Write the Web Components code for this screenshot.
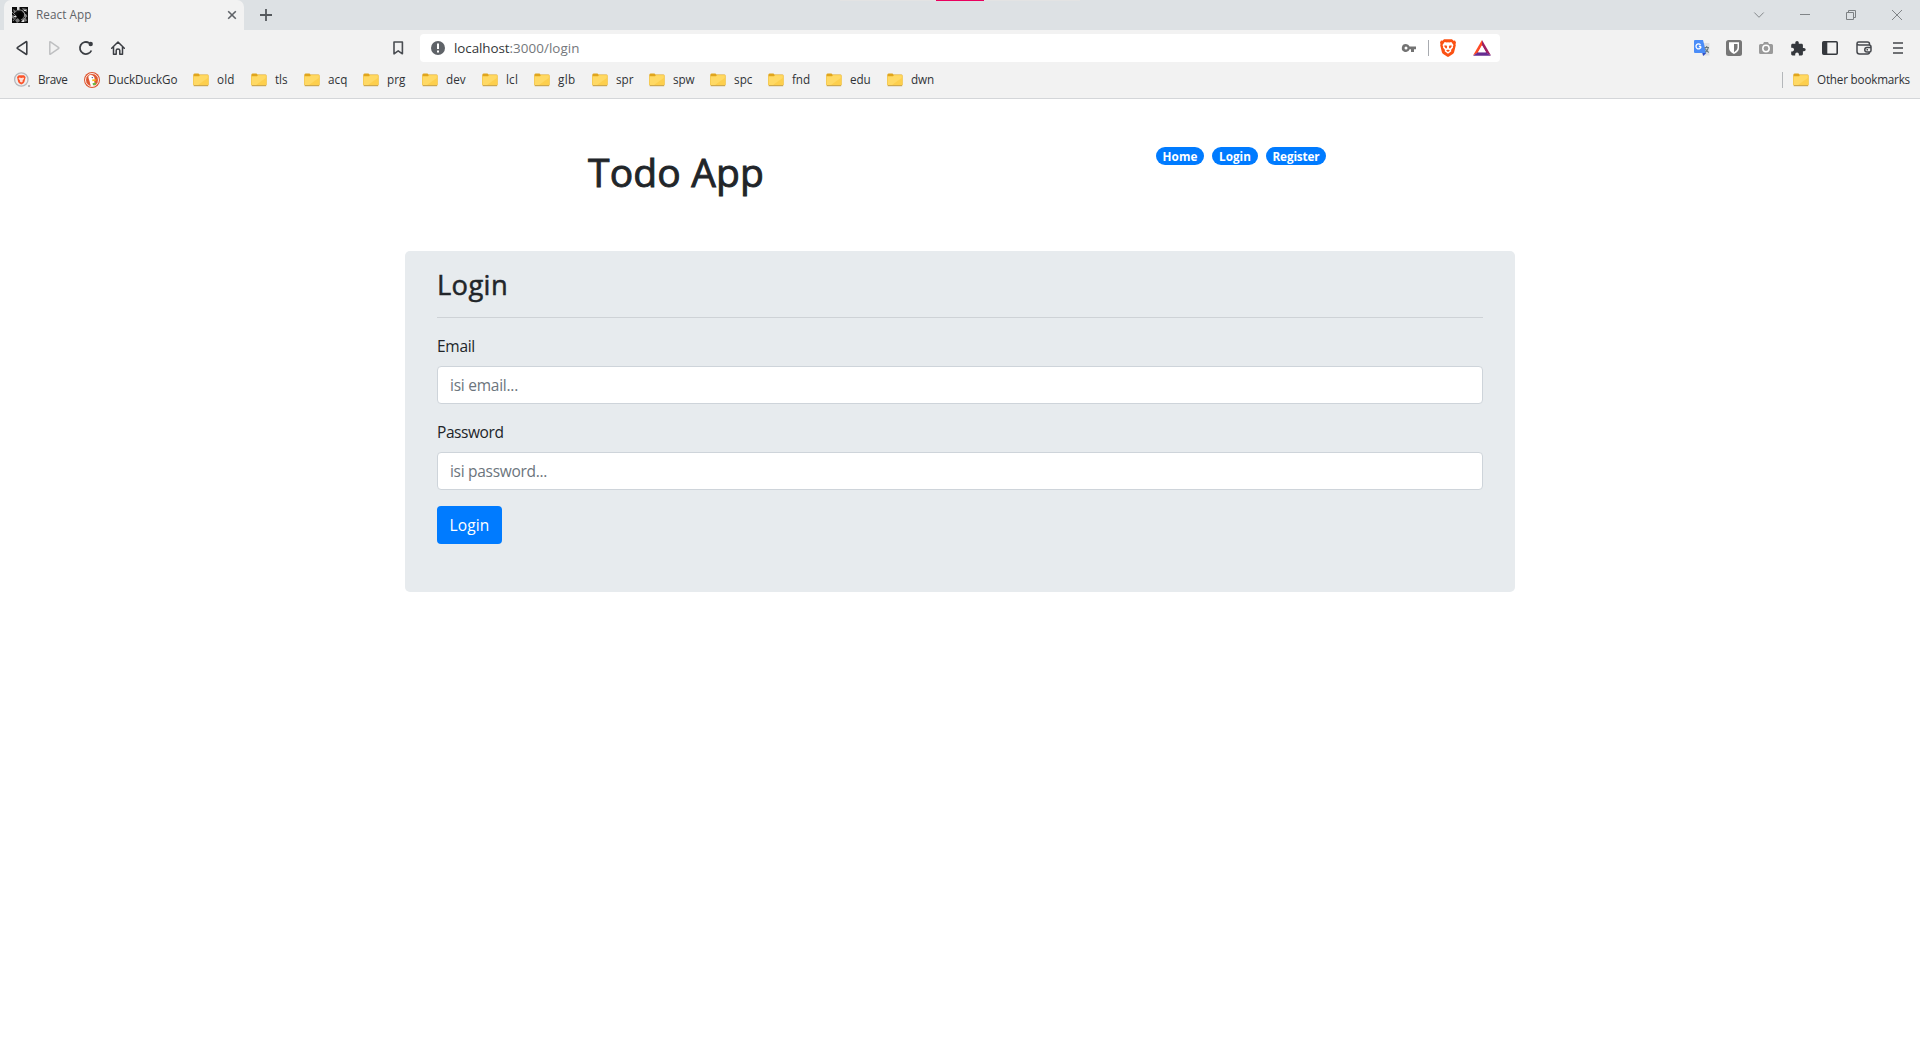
<!DOCTYPE html>
<html lang="en"><head><meta charset="utf-8"><title>React App</title>
<style>
html,body{margin:0;height:100%;overflow:hidden;background:#fff;font-family:"Open Sans","Noto Sans",sans-serif;color:#212529}
</style></head><body>
<browser-window></browser-window>
<script>
const define=(name,html,setup)=>customElements.define(name,class extends HTMLElement{
  connectedCallback(){
    if(this.shadowRoot)return;
    const r=this.attachShadow({mode:'open'});
    r.innerHTML=typeof html==='function'?html(this):html;
    if(setup)setup(this,r);
  }
});

/* Text run tracked to a given width: <fit-text w="width" s="font size"> */
define('fit-text',el=>`<style>:host{display:block;white-space:nowrap;flex:none;font-size:${el.getAttribute('s')}px;line-height:20px}:host([up]){margin-bottom:2px}span{display:inline-block}</style><span><slot></slot></span>`,(el,r)=>{
  const w=+el.getAttribute('w'),sp=r.querySelector('span');
  const n=sp.getBoundingClientRect().width,len=el.textContent.length;
  if(n&&w)sp.style.letterSpacing=((w-n)/len)+'px';
  el.style.width=w+'px';
});

const icons={
folder:[16,16,`<path d="M.3 3q0-1.500 1.200-1.500h3.700q.8 0 1.200 1h8q1.100 0 1.100 1.200V13H.3z" fill="#e0a51d"/><path d="M.3 4.200h5.500l1.200-1.100h7.700q.8 0 .8.900v8.600q0 .9-.9.900H1.200q-.9 0-.9-.9z" fill="#fdcf4d"/><path d="M.8 4.600h5.300l1.100-1h7.500v2.500L5 13H.8z" fill="#ffdd6e" opacity=".7"/><path d="M.7 13.700h14.500" stroke="#c39a3c" stroke-width="1"/>`],
favicon:[16,16,`<path fill="#0b0b0b" d="M0 0h16v16H0z"/><path d="M5 0h3v3H5zM1 2l3 2-2 2zM10 1l5 1v3l-4-2zM0 8l3 1-1 3-2-1zM12 6l3 2-1 3-2-2zM3 13l3-2 2 3-3 2zM10 12l4-1 1 3-3 1z" fill="#777"/><path d="M5 0h2v3H5zM2 9h2v1H2zM10 13h2v2h-2zM12 3h2v1h-2z" fill="#ddd"/><path d="M2 6q3-4 7-3 4 2 4 5-1 4-4 5M1 14l4-5M10 3l5 7M0 5l4 4M9 15l5-5" stroke="#999" fill="none" stroke-width=".8"/><path d="M5.500 6.500L8 5l2.500 2-.5 4-3 1-2-2z" fill="#000"/>`],
x:[10,10,`<path d="M1.200 1.200l7.600 7.600M8.800 1.200L1.200 8.800" stroke="#5f6368" stroke-width="1.6"/>`],
plus:[12,12,`<path d="M6 0v12M0 6h12" stroke="#55595d" stroke-width="1.8"/>`],
back:[14,16,`<path d="M10.8 2.200v11.600q0 .8-.7.4L1.600 8.700q-.9-.7 0-1.400l8.500-5.500q.7-.4.7.4z" fill="none" stroke="#3b3e43" stroke-width="1.6"/>`],
fwd:[14,16,`<path d="M1.800 2.200v11.600q0 .8.7.4L10.400 8.700q.9-.7 0-1.400L2.500 1.800q-.7-.4-.7.4z" fill="none" stroke="#bfc0c2" stroke-width="1.5"/>`],
reload:[14,14,`<path d="M12.400 9.500A6 6 0 1 1 10.200 2" fill="none" stroke="#3b3e43" stroke-width="1.8"/><circle cx="11.700" cy="3" r="2.200" fill="#3b3e43"/>`],
home:[14,14,`<path d="M.7 7.200L7 1l6.300 6.200M2.500 6v7.200H5.200V9.500q0-1.500 1.800-1.500t1.800 1.500v3.700h2.700V6" fill="none" stroke="#3b3e43" stroke-width="1.5" stroke-linejoin="round" stroke-linecap="round"/>`],
mark:[11,14,`<path d="M1 1h8.400v11.800L5.200 9.800 1 12.800z" fill="none" stroke="#4a4d52" stroke-width="1.600" stroke-linejoin="round"/>`],
info:[14,14,`<circle cx="7" cy="7" r="7" fill="#5f6368"/><path d="M6 2.500h2V8H6zM6 9.500h2v2H6z" fill="#fff"/>`],
key:[14,8,`<path fill-rule="evenodd" d="M4 0a4 4 0 1 0 3.600 5.300H9V8h3V5.300h2V2.500H7.600A4 4 0 0 0 4 0zM4 2.500A1.500 1.500 0 1 1 4 5.500 1.500 1.500 0 0 1 4 2.500z" fill="#737373"/>`],
lion:[16,18,`<path d="M4 .2h8l1.500 1.500 1.500-.2 1 2-.5 1.700.3 1-1.700 7q-.3 1.200-1.300 1.900L9 17.600q-1 .7-2 0l-3.800-2.500q-1-.7-1.300-1.900L.2 6.200l.3-1L0 3.500l1-2 1.500.2z" fill="#fb5113"/><path d="M4.700 3l2 .5L8 3.300l1.300.2 2-.5L13.500 6l-.7 1.600.2 1-2 2.400.3 1.300L8 14.800 4.700 12.300 5 11 3 8.600l.2-1L2.500 6z" fill="#fff"/><path d="M4.500 6.200l2.500.5.3 2.300L6 9.500 4.400 7.800zM11.500 6.200L9 6.700 8.700 9l1.300.5 1.600-1.700zM6 11.500l2-.9 2 .9-2 1.500z" fill="#fb5113"/><path d="M6.900 7.500h2.200L9 10H7z" fill="#fff"/>`],
bat:[18,16,`<path d="M9 0L0 15.500l5-2.800L9 5.500z" fill="#ff4b24"/><path d="M9 0l9 15.500-5-2.800L9 5.500z" fill="#9e1f63"/><path d="M0 15.700h18l-5-3.500H5z" fill="#662d91"/><path d="M9 5.300l4 7H5z" fill="#fff"/>`],
translate:[16,16,`<path d="M6 3h9.500v12.500H8z" fill="#dedfe1"/><path d="M0 1q0-1 1-1h8l3.200 13H1q-1 0-1-1z" fill="#4b8df8"/><path d="M8.300 13h4l-3 3z" fill="#304ec5"/><path d="M7 6.500H4.900M6.500 4.900A2.500 2.500 0 1 0 7 6.500" fill="none" stroke="#fff" stroke-width="1.300"/><path d="M10.500 7.500H15M12.700 6v1.500M14.300 7.700q-.5 3-3 4.500M11.300 8.500q1 2.700 3.500 4" fill="none" stroke="#68797f" stroke-width="1.100"/>`],
shield:[16,16,`<rect width="16" height="16" rx="2.500" fill="#777"/><path d="M3 2.300h10V8q0 3.500-5 6-5-2.500-5-6z" fill="#fff"/><path d="M8 4h3.500v4q0 2-3.500 4.200z" fill="#777"/>`],
camera:[14,14,`<path d="M1.500 3H4l1-2h4l1 2h2.500Q14 3 14 4.500v7q0 1.500-1.500 1.500h-11Q0 13 0 11.500v-7Q0 3 1.500 3z" fill="#9a9a9a"/><circle cx="7" cy="7.500" r="3.200" fill="none" stroke="#fff" stroke-width="1.500"/>`],
puzzle:[15,15,`<path transform="translate(-1.200 -.7) scale(.69)" d="M20.500 11H19V7c0-1.100-.9-2-2-2h-4V3.500C13 2.120 11.880 1 10.500 1S8 2.120 8 3.500V5H4c-1.100 0-1.990.9-1.990 2v3.800H3.500c1.490 0 2.700 1.210 2.700 2.700s-1.210 2.700-2.700 2.700H2V20c0 1.100.9 2 2 2h3.800v-1.500c0-1.490 1.210-2.700 2.700-2.700s2.700 1.210 2.700 2.700V22H17c1.100 0 2-.9 2-2v-4h1.500c1.380 0 2.500-1.120 2.500-2.500S21.880 11 20.500 11z" fill="#35383d"/>`],
panel:[16,14,`<rect x=".8" y=".8" width="14.400" height="12.400" rx="1" fill="none" stroke="#35383d" stroke-width="1.600"/><path d="M1 1h4.300v12H1z" fill="#35383d"/>`],
wallet:[16,14,`<path d="M13.500 3.500V3q0-2-2-2H2.500Q1 1 1 2.500v8Q1 13 3.500 13h8q2 0 2-2M1 2.500Q1 4 3 4h10q2 0 2 2v3.500q0 1.500-1.500 1.500H11A2.200 2.200 0 0 1 11 6.500h4M10.500 8.700H12" fill="none" stroke="#45484d" stroke-width="1.500"/>`],
menu:[10,12,`<path d="M0 1h10M0 6h10M0 11h10" stroke="#44474b" stroke-width="1.600"/>`],
chev:[10,6,`<path d="M.3.500L5 5.300 9.700.5" fill="none" stroke="#85898c"/>`],
min:[10,2,`<path d="M0 .5h10" stroke="#808487"/>`],
restore:[10,10,`<path d="M.5 2.500h7v7h-7zM2.500 2.500v-2h7v7h-2" fill="none" stroke="#7c8083"/>`],
close:[10,10,`<path d="M0 0l10 10M10 0L0 10" stroke="#808487"/>`],
brave:[16,16,`<circle cx="7.300" cy="7.500" r="6.700" fill="#eee" stroke="#b6b7bc" stroke-width="1.300"/><path d="M4.700 3.200h5.300l1.600 1.700-1.200 5.200q-.3 1-3.100 2.500-2.800-1.500-3.100-2.500L3 4.900z" fill="#fb542b"/><path d="M5.300 5.400l2 .6 2.100-.6.700 1.200-1.500 2 .2 1-1.500 1-1.500-1 .2-1-1.500-2z" fill="#fff" opacity=".8"/><circle cx="15" cy="14" r="1" fill="#a5a5a7"/>`],
duck:[16,16,`<circle cx="8" cy="8" r="8" fill="#de5833"/><circle cx="8" cy="8" r="6.500" fill="none" stroke="#fff" stroke-width=".9"/><path d="M4.500 4Q6 2.300 8.300 3.300q2.500 1 2.400 3.700l-.5 2 .8 4.200q-2 1.200-4.300.5L5.500 9Q4 6 4.500 4z" fill="#fff"/><path d="M8.300 7.300l4.200.2q-.3 1.500-4.200 1.700z" fill="#fdb913"/><path d="M8.500 11.300l3.200-.8.300 2.300-3 .4z" fill="#67bd47"/><circle cx="8.300" cy="5.600" r=".7" fill="#2d4f8d"/>`]
};
define('ui-icon',el=>{const[w,h,p]=icons[el.getAttribute('n')];return`<style>:host{display:block;flex:none;width:${w}px;height:${h}px}svg{display:block;overflow:visible}</style><svg width="${w}" height="${h}" viewBox="0 0 ${w} ${h}">${p}</svg>`});

/* Horizontal distance between neighbours in a toolbar */
define('x-gap',el=>`<style>:host{display:block;flex:none;width:${el.getAttribute('w')}px}</style>`);

define('tab-strip',`<style>
:host{display:flex;height:30px;background:#dde1e4;align-items:center;padding-left:4px;box-sizing:border-box;position:relative}
.tab{width:240px;height:30px;background:#f2f2f2;border-radius:7px 7px 0 0;display:flex;align-items:center;padding:0 7px 0 8px;box-sizing:border-box;color:#5f6368}
.pink{position:absolute;left:936px;top:0;width:48px;height:1px;background:#ea005e}
.edge{position:absolute;left:840px;top:0;width:240px;height:1px;background:#e3e3e3}
</style>
<div class="tab"><ui-icon n="favicon"></ui-icon><x-gap w="8"></x-gap><fit-text up w="55.500" s="11.700">React App</fit-text><x-gap w="135.500"></x-gap><ui-icon n="x"></ui-icon></div>
<x-gap w="16"></x-gap><ui-icon n="plus"></ui-icon><x-gap w="1482"></x-gap>
<ui-icon n="chev"></ui-icon><x-gap w="36"></x-gap><ui-icon n="min"></ui-icon><x-gap w="36"></x-gap><ui-icon n="restore"></ui-icon><x-gap w="36"></x-gap><ui-icon n="close"></ui-icon>
<div class="edge"></div><div class="pink"></div>`);

define('address-bar',`<style>
:host{display:flex;box-sizing:border-box;width:1080px;height:28px;background:#fff;border-radius:4px;align-items:center;padding:0 9px 0 11px;flex:none}
.t{display:flex;color:#333639}.g{color:#74777b}.grow{flex:1}.sep{width:1px;height:16px;background:#a8abb0}
</style><ui-icon n="info"></ui-icon><x-gap w="9"></x-gap><div class="t"><fit-text w="55.500" s="13.400">localhost</fit-text><fit-text class="g" w="70" s="13.400">:3000/login</fit-text></div>
<div class="grow"></div><ui-icon n="key"></ui-icon><x-gap w="12"></x-gap><div class="sep"></div><x-gap w="11"></x-gap><ui-icon n="lion"></ui-icon><x-gap w="17"></x-gap><ui-icon n="bat"></ui-icon>`);

define('nav-bar',`<style>:host{display:flex;height:36px;align-items:center;padding-left:16px;background:#f2f2f2}</style>
<ui-icon n="back"></ui-icon><x-gap w="18"></x-gap><ui-icon n="fwd"></ui-icon><x-gap w="17"></x-gap><ui-icon n="reload"></ui-icon><x-gap w="18"></x-gap><ui-icon n="home"></ui-icon><x-gap w="268"></x-gap><ui-icon n="mark"></ui-icon><x-gap w="16"></x-gap>
<address-bar></address-bar><x-gap w="194"></x-gap>
<ui-icon n="translate"></ui-icon><x-gap w="16"></x-gap><ui-icon n="shield"></ui-icon><x-gap w="17"></x-gap><ui-icon n="camera"></ui-icon><x-gap w="18"></x-gap><ui-icon n="puzzle"></ui-icon><x-gap w="16"></x-gap><ui-icon n="panel"></ui-icon><x-gap w="18"></x-gap><ui-icon n="wallet"></ui-icon><x-gap w="21"></x-gap><ui-icon n="menu"></ui-icon>`);

define('book-mark',el=>`<style>:host{display:flex;flex:none;align-items:center;gap:8px;width:${el.getAttribute('pitch')}px;color:#303236}</style><ui-icon n="${el.getAttribute('icon')||'folder'}"></ui-icon><fit-text up w="${el.getAttribute('w')}" s="11.700">${el.textContent}</fit-text>`);

const marks=[['Brave',29.5,70,'brave'],['DuckDuckGo',69.5,109,'duck'],['old',17.5,58],['tls',12.5,53],['acq',19.5,59],['prg',18.5,59],['dev',19.5,60],['lcl',12,52],['glb',17.5,58],['spr',17.5,57],['spw',21.5,61],['spc',18.5,58],['fnd',18,58],['edu',20.5,61],['dwn',23,50]];
define('bookmark-bar',`<style>:host{display:flex;box-sizing:border-box;height:33px;padding:0 10px 4px 14px;align-items:center;background:#f2f2f2;border-bottom:1px solid #d4d6d9}.grow{flex:1}.sep{width:1px;height:16px;background:#b4b7ba;margin-right:10px}</style>
${marks.map(m=>`<book-mark w="${m[1]}" pitch="${m[2]}" icon="${m[3]||''}">${m[0]}</book-mark>`).join('')}
<div class="grow"></div><div class="sep"></div><book-mark w="93" pitch="117">Other bookmarks</book-mark>`);

define('nav-badge',el=>`<style>:host{display:flex;box-sizing:border-box;height:18px;width:${el.getAttribute('bw')}px;border-radius:9px;background:#007bff;color:#fff;font-weight:700;justify-content:center;align-items:center}</style><fit-text w="${el.getAttribute('w')}" s="11.700">${el.textContent}</fit-text>`);

define('app-header',`<style>:host{display:flex;height:152px;box-sizing:border-box;padding:48px 0 0 588px}
h1{margin:15px 0 0;font-weight:500;width:568px;height:20px;-webkit-text-stroke:.9px #212529}nav{display:flex;gap:8px}</style>
<h1><fit-text w="176" s="39">Todo App</fit-text></h1><nav><nav-badge bw="48" w="35">Home</nav-badge><nav-badge bw="46" w="32">Login</nav-badge><nav-badge bw="60" w="47">Register</nav-badge></nav>`);

define('form-field',el=>`<style>:host{display:block;height:86px}label{display:flex;height:24px;align-items:center;margin-bottom:8px}
.in{height:38px;box-sizing:border-box;border:1px solid #ced4da;border-radius:4px;background:#fff;padding-left:12px;display:flex;align-items:center;color:#6c757d}</style>
<label><fit-text w="${el.getAttribute('lw')}" s="15.500">${el.getAttribute('label')}</fit-text></label><div class="in"><fit-text w="${el.getAttribute('pw')}" s="15.500">${el.getAttribute('hint')}</fit-text></div>`);

define('login-card',`<style>:host{display:block;box-sizing:border-box;width:1110px;height:341px;margin:0 auto;padding:24px 32px 0;border-radius:5px;background:#e7ebee}
h2{margin:0;height:42px;font-weight:500;display:flex;align-items:flex-start;-webkit-text-stroke:.5px #212529}hr{border:0;height:1px;background:#ced2d6;margin:0 0 16px}
button{border:0;padding:0;width:65px;height:38px;border-radius:4px;background:#007bff;color:#fff;font-family:inherit;display:flex;align-items:center;justify-content:center}</style>
<h2><fit-text w="71" s="27.300">Login</fit-text></h2><hr>
<form-field label="Email" lw="38" hint="isi email..." pw="68"></form-field><form-field label="Password" lw="66.500" hint="isi password..." pw="97"></form-field>
<button type="button"><fit-text w="40" s="15.500">Login</fit-text></button>`);

define('browser-window',`<style>:host{display:block}main{display:block}</style><tab-strip></tab-strip><nav-bar></nav-bar><bookmark-bar></bookmark-bar><main><app-header></app-header><login-card></login-card></main>`);
</script></body></html>
